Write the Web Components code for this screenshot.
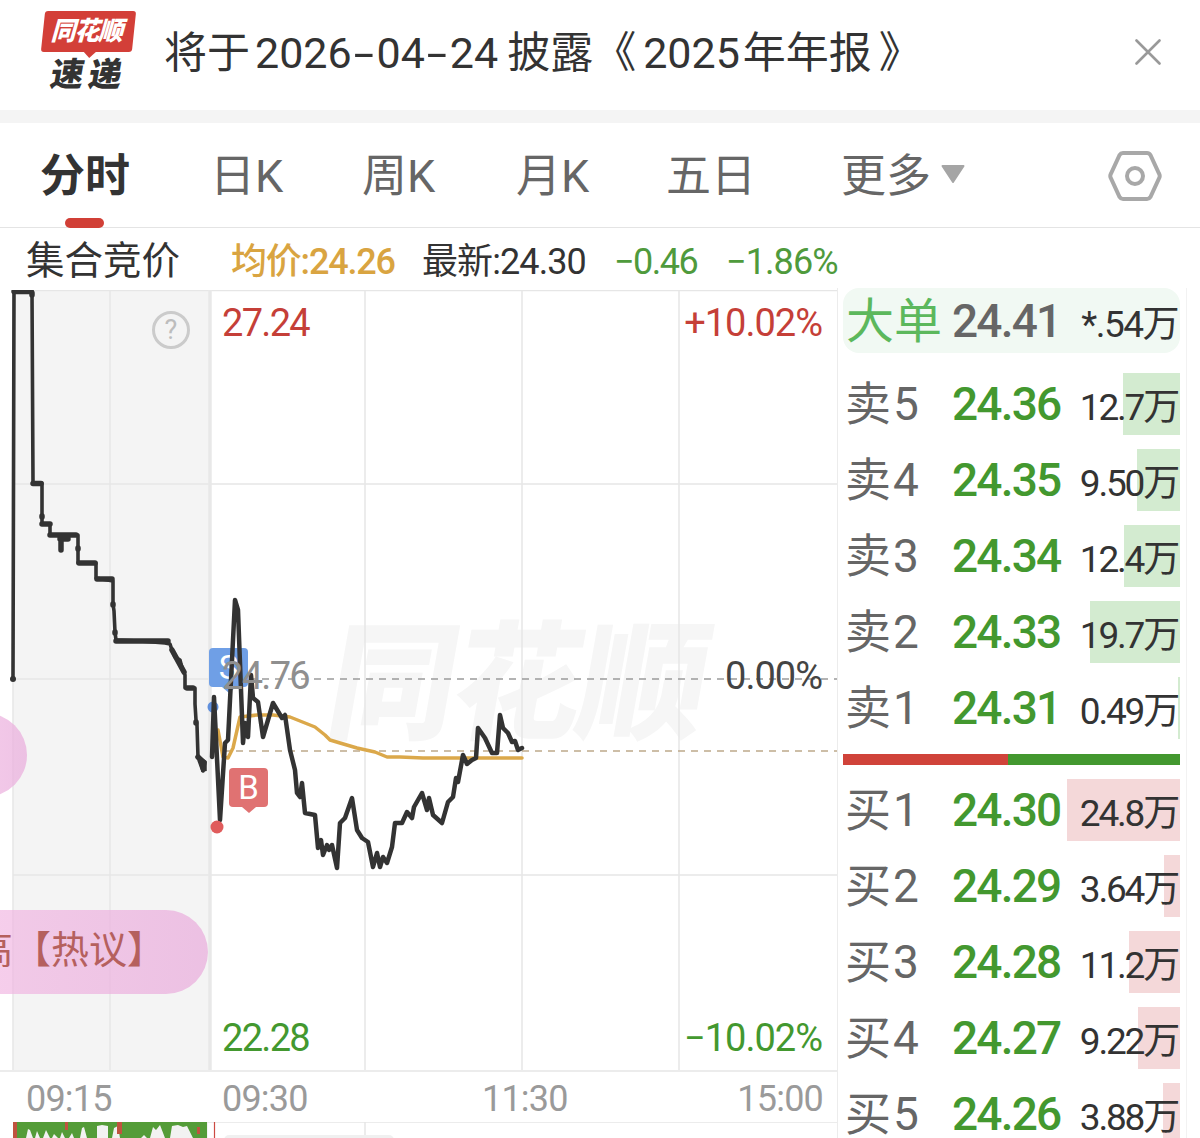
<!DOCTYPE html>
<html lang="zh">
<head>
<meta charset="utf-8">
<title>分时</title>
<style>
    html, body
    {
        margin: 0;
        background: #fff;
        height: 1138px;
        overflow: hidden;
        font-family: Roboto, "Noto Sans CJK SC", sans-serif;
    }
</style>
</head>
<body>

<ths-banner>将于<span style="margin-left:5px">2026</span><span class="h">-</span>04<span class="h">-</span><span style="margin-right:9px">24</span>披露《<span style="margin:0 3px 0 7px">2025</span>年年报<span style="margin-left:7px">》</span></ths-banner>

<ths-tabs>
    <ths-tab slot="tabs" active style="width:170px">分时</ths-tab>
    <ths-tab slot="tabs" style="width:152px">日K</ths-tab>
    <ths-tab slot="tabs" style="width:154px">周K</ths-tab>
    <ths-tab slot="tabs" style="width:150px">月K</ths-tab>
    <ths-tab slot="tabs" style="width:175px">五日</ths-tab>
    <ths-tab slot="tabs" caret>更多</ths-tab>
</ths-tabs>

<ths-quote></ths-quote>

<ths-main>
    <ths-chart slot="chart"></ths-chart>
    <ths-book slot="book">
        <ths-big-order></ths-big-order>
        <ths-level side="sell" label="卖5" price="24.36" vol="12.7" bar="57"></ths-level>
        <ths-level side="sell" label="卖4" price="24.35" vol="9.50" bar="43"></ths-level>
        <ths-level side="sell" label="卖3" price="24.34" vol="12.4" bar="56"></ths-level>
        <ths-level side="sell" label="卖2" price="24.33" vol="19.7" bar="90"></ths-level>
        <ths-level side="sell" label="卖1" price="24.31" vol="0.49" bar="2"></ths-level>
        <ths-ratio></ths-ratio>
        <ths-level side="buy" label="买1" price="24.30" vol="24.8" bar="113"></ths-level>
        <ths-level side="buy" label="买2" price="24.29" vol="3.64" bar="16"></ths-level>
        <ths-level side="buy" label="买3" price="24.28" vol="11.2" bar="51"></ths-level>
        <ths-level side="buy" label="买4" price="24.27" vol="9.22" bar="42"></ths-level>
        <ths-level side="buy" label="买5" price="24.26" vol="3.88" bar="17"></ths-level>
    </ths-book>
</ths-main>

<script>
/**
 * base class: clones static sTemplate into an open shadow root
 */
class THSElement extends HTMLElement
{
    static sTemplate = ``;

    constructor()
    {
        super();
        this.attachShadow({mode: "open"});
        const objTemplate = document.createElement("template");
        objTemplate.innerHTML = this.constructor.sTemplate;
        this.shadowRoot.appendChild(objTemplate.content.cloneNode(true));
    }
}

/**
 * top banner: logo, title, close button
 */
class THSBanner extends THSElement
{
    static sTemplate = `
        <style>
            :host
            {
                display: flex;
                align-items: center;
                height: 110px;
                padding-left: 41px;
                padding-right: 39px;
                border-bottom: 13px solid #f4f4f4;
                color: #333;
            }
            .logo
            {
                display: flex;
                flex-direction: column;
                width: 96px;
                margin-right: 27px;
                margin-top: -6px;
                flex: none;
            }
            .badge
            {
                position: relative;
                width: 91px;
                height: 41px;
                margin-left: 2px;
                background: #d33f38;
                border-radius: 3px;
                transform: skewX(-6deg);
                color: #fff;
                font-size: 26px;
                font-weight: 900;
                line-height: 41px;
                text-align: center;
                white-space: nowrap;
            }
            .badge span
            {
                display: inline-block;
                transform: skewX(-10deg) scaleX(0.95);
                letter-spacing: -1px;
            }
            .badge::after
            {
                content: "";
                position: absolute;
                left: 43px;
                bottom: -6px;
                width: 0;
                height: 0;
                border-left: 6px solid transparent;
                border-right: 6px solid transparent;
                border-top: 6px solid #d33f38;
            }
            .sub
            {
                margin-top: 5px;
                padding-left: 10px;
                font-size: 33px;
                line-height: 36px;
                font-weight: 900;
                color: #333;
                letter-spacing: 5px;
                transform: skewX(-10deg);
                white-space: nowrap;
            }
            .title
            {
                flex: 1;
                font-size: 43px;
                line-height: 50px;
                white-space: nowrap;
                margin-top: -4px;
            }
            ::slotted(.h)
            {
                display: inline-block;
                margin: 0 6.5px;
                transform: scaleX(1.700);
            }
            svg { flex: none; display: block; margin-top: -6px; }
        </style>
        <div class="logo">
            <div class="badge"><span>同花顺</span></div>
            <div class="sub">速递</div>
        </div>
        <div class="title"><slot></slot></div>
        <svg width="26" height="26" viewBox="0 0 26 26"><path d="M1.5 1.5L24.5 24.5M24.5 1.5L1.5 24.5" stroke="#999" stroke-width="2.6" stroke-linecap="round" fill="none"/></svg>
    `;
}

/**
 * tab strip with settings icon
 */
class THSTabs extends THSElement
{
    static sTemplate = `
        <style>
            :host
            {
                display: flex;
                align-items: stretch;
                height: 105px;
                box-sizing: border-box;
                border-bottom: 1px solid #e4e4e4;
                padding-left: 40px;
                padding-right: 38px;
            }
            .tabs { flex: 1; display: flex; }
            svg { align-self: center; display: block; margin-top: 1px; }
        </style>
        <div class="tabs"><slot name="tabs"></slot></div>
        <svg width="54" height="52" viewBox="0 0 54 52">
            <path d="M15 3H39a4 4 0 0 1 3.400 2L51 23.500a5 5 0 0 1 0 5L42.400 47a4 4 0 0 1-3.400 2H15a4 4 0 0 1-3.400-2L3 28.500a5 5 0 0 1 0-5L11.600 5A4 4 0 0 1 15 3Z" fill="none" stroke="#a8a8a8" stroke-width="4"/>
            <circle cx="27" cy="26" r="8" fill="none" stroke="#a8a8a8" stroke-width="4"/>
        </svg>
    `;
}

class THSTab extends THSElement
{
    static sTemplate = `
        <style>
            :host
            {
                display: flex;
                align-items: center;
                position: relative;
                height: 104px;
                font-size: 45px;
                color: #666;
                white-space: nowrap;
                padding-bottom: 5px;
                box-sizing: border-box;
            }
            :host([active])
            {
                color: #333;
                font-weight: 700;
            }
            :host([active])::after
            {
                content: "";
                position: absolute;
                left: 25px;
                bottom: -1px;
                width: 39px;
                height: 10px;
                border-radius: 5px;
                background: #d13f36;
            }
            .caret { display: none; margin-left: 10px; margin-top: 3px; }
            :host([caret]) .caret { display: block; }
        </style>
        <slot></slot>
        <svg class="caret" width="24" height="20" viewBox="0 0 24 20"><path d="M1.500 2H22.500L12 18Z" fill="#a5a5a5" stroke="#a5a5a5" stroke-width="2" stroke-linejoin="round"/></svg>
    `;
}

/**
 * line with latest quote numbers
 */
class THSQuote extends THSElement
{
    static sTemplate = `
        <style>
            :host
            {
                display: grid;
                grid-template-columns: 205px 191px 192px 112px 1fr;
                align-items: baseline;
                height: 60px;
                padding-left: 26px;
                padding-top: 1px;
                font-size: 36px;
                letter-spacing: -0.9px;
                white-space: nowrap;
                color: #333;
                box-sizing: border-box;
            }
            .name { font-size: 38.500px; letter-spacing: 0; }
            .avg { color: #d9a441; font-weight: 500; letter-spacing: -1.200px; }
            .down { color: #4f9a3c; }
            .tight { letter-spacing: -1.500px; }
        </style>
        <div class="name">集合竞价</div>
        <div class="avg">均价:24.26</div>
        <div>最新:24.30</div>
        <div class="down tight">−0.46</div>
        <div class="down">−1.86%</div>
    `;
}

/**
 * main part: chart on the left, order book on the right
 */
class THSMain extends THSElement
{
    static sTemplate = `
        <style>
            :host
            {
                display: flex;
                height: 850px;
                overflow: hidden;
            }
        </style>
        <slot name="chart"></slot>
        <slot name="book"></slot>
    `;
}

/**
 * intraday chart. svg uses page coordinates through its viewBox
 */
class THSChart extends THSElement
{
    static sStepLine = "M13 679L14 291L32 291L33 483L42 483L42 516L42 524L50 524L50 535L78 535L78 548L78 563L96 563L96 578L113 581L113 604L114 611L115 632L116 640L140 641L165 643L170 644L172 650L175 657L180 660L182 668L185 675L185 688L195 688L195 704L196 720L197 725L198 757L205 762L203 771L200 760";
    static sMainLine = "M212 757L214 697L220 820L225 743L228 740L235 600L238 610L243 743L245 723L248 737L251 675L253 698L258 702L263 737L273 703L282 718L285 715L290 750L295 770L297 793L300 797L302 783L305 813L315 815L318 848L321 840L323 855L327 845L329 850L332 845L337 868L340 823L345 818L352 798L357 830L362 838L368 842L373 867L377 853L380 867L383 857L387 863L392 847L395 823L402 823L407 812L412 818L414 807L422 793L427 810L429 798L433 815L442 823L448 802L453 797L456 778L458 782L463 755L467 764L472 760L476 758L478 728L485 738L492 753L497 753L500 715L503 728L508 733L512 742L515 741L518 750L522 748";
    static sAvgLine = "M218 730L223 757L228 758L233 748L240 717L257 715L273 715L290 717L300 721L315 727L325 735L330 740L340 743L357 748L375 752L387 757L400 757L423 758L522 758";
    static sCutouts = "M26 1138L28 1129L30 1130L33 1138ZM35 1138L37 1131L40 1138ZM43 1138L46 1130L50 1138ZM52 1138L54 1134L58 1138ZM60 1138L62 1132L65 1138ZM69 1138L72 1133L74 1138ZM80 1138L82 1128L84 1127L87 1138ZM97 1138V1126L102 1125L108 1126V1138ZM112 1138L114 1128L118 1126L120 1138ZM141 1138L144 1135L147 1138ZM150 1138L153 1127L156 1130L160 1125L165 1138ZM170 1138L172 1126L178 1125L183 1127L187 1126L193 1138Z";

    static sTemplate = `
        <style>
            :host
            {
                display: flex;
                flex-direction: column;
                position: relative;
                width: 837px;
                flex: none;
                height: 848px;
                margin-top: 2px;
                overflow: hidden;
                color: #333;
            }
            .plot { position: relative; height: 780px; flex: none; }
            .plot svg { position: absolute; left: 0; top: 0; display: block; }
            .mark
            {
                position: absolute;
                left: 330px;
                top: 330px;
                font-size: 128px;
                line-height: 130px;
                font-weight: 900;
                letter-spacing: -3px;
                color: #f6f6f6;
                transform: skewX(-10deg);
                white-space: nowrap;
            }
            .lbl
            {
                position: absolute;
                font-size: 38px;
                line-height: 44px;
                letter-spacing: -1.700px;
                white-space: nowrap;
            }
            .red { color: #c53f38; }
            .green { color: #43982f; }
            .r { right: 15px; letter-spacing: -1px; }
            .pill
            {
                position: absolute;
                display: flex;
                justify-content: flex-end;
                height: 84px;
                border-radius: 42px;
                background: linear-gradient(to right, rgba(243, 180, 226, 0.62), rgba(234, 178, 222, 0.78));
                color: #b5605e;
                font-size: 38px;
                line-height: 80px;
                white-space: nowrap;
                box-sizing: border-box;
                overflow: hidden;
            }
            .badge
            {
                position: absolute;
                width: 39px;
                height: 39px;
                border-radius: 4px;
                color: #fff;
                font-size: 33px;
                line-height: 39px;
                text-align: center;
            }
            .badge::after
            {
                content: "";
                position: absolute;
                left: 13px;
                bottom: -6px;
                border-left: 7px solid transparent;
                border-right: 7px solid transparent;
                border-top: 6px solid var(--badge);
            }
            .s { --badge: #6f9fe6; left: 209px; top: 358px; background: #6f9fe6; }
            .b { --badge: #e07272; left: 229px; top: 478px; background: #e07272; }
            .help
            {
                position: absolute;
                left: 152px;
                top: 21px;
                width: 32px;
                height: 32px;
                border: 3px solid #cbcbcb;
                border-radius: 50%;
                color: #bdbdbd;
                font-size: 27px;
                line-height: 33px;
                text-align: center;
            }
            .times
            {
                display: grid;
                grid-template-columns: 196px 260px 1fr auto;
                align-items: center;
                height: 52px;
                flex: none;
                box-sizing: border-box;
                padding: 4px 14px 0 26px;
                font-size: 36px;
                letter-spacing: -0.8px;
                color: #9a9a9a;
                border-top: 2px solid #ececec;
            }
            .vol { display: block; flex: none; }
        </style>
        <div class="plot">
            <div class="mark">同花顺</div>
            <svg width="837" height="780" viewBox="0 290 837 780">
                <rect x="13" y="290" width="196" height="780" fill="#f4f4f4"/>
                <g stroke="#e6e6e6" stroke-width="1.500" fill="none">
                    <path d="M13 290V1070M110 290V1070M365 290V1070M522 290V1070M679 290V1070"/>
                    <path d="M13 290.500H837M13 484H837M13 679H210M13 875H837"/>
                </g>
                <path d="M210 290V1070" stroke="#e8e8e8" stroke-width="3.500"/>
                <path d="M210 679H837" stroke="#9b9b9b" stroke-width="1.500" stroke-dasharray="7 6"/>
                <path d="M210 751H837" stroke="#bda98a" stroke-width="1.500" stroke-dasharray="7 6"/>
                <path d="${THSChart.sAvgLine}" fill="none" stroke="#dba84a" stroke-width="3.500" stroke-linejoin="round" stroke-linecap="round"/>
                <path d="${THSChart.sStepLine}" fill="none" stroke="#333" stroke-width="3.600" stroke-linejoin="round" stroke-linecap="round"/>
                <path d="M14 291.500H31M32 293V295M33 483.500H41M42 516V517M42 524H50M50 535H76M61 537V550M60 539H68M78 548V549M79 563H95M97 579H112M113 604V605M115 632V633M116 641H168M172 650L184 672M187 688H193M196 722V723M198 757L204 763L204 771L200 760" fill="none" stroke="#333" stroke-width="5.500" stroke-linecap="round"/>
                <circle cx="13" cy="679" r="3" fill="#333"/>
            </svg>
            <div class="badge s">S</div>
            <svg width="837" height="780" viewBox="0 290 837 780">
                <circle cx="213" cy="707" r="5.500" fill="#5f8fdc"/>
                <path d="${THSChart.sMainLine}" fill="none" stroke="#333" stroke-width="4.500" stroke-linejoin="round" stroke-linecap="round"/>
                <circle cx="217" cy="827" r="6.500" fill="#e05c5c"/>
            </svg>
            <div class="badge b">B</div>
            <div class="help">?</div>
            <div class="lbl red" style="left:222px;top:11px">27.24</div>
            <div class="lbl red r" style="top:11px">+10.02%</div>
            <div class="lbl" style="left:222px;top:364px;color:#8f8f8f">24.76</div>
            <div class="lbl r" style="top:364px;color:#444">0.00%</div>
            <div class="lbl green" style="left:222px;top:726px">22.28</div>
            <div class="lbl green r" style="top:726px">−10.02%</div>
            <div class="pill" style="left:-57px;top:423px;width:84px"></div>
            <div class="pill" style="left:-60px;top:620px;width:268px;padding-right:43px"><span>高【热议】</span></div>
        </div>
        <div class="times">
            <div>09:15</div>
            <div>09:30</div>
            <div>11:30</div>
            <div>15:00</div>
        </div>
        <svg class="vol" width="837" height="16" viewBox="0 1122 837 16">
            <rect x="13" y="1122" width="195" height="16" fill="#f4f4f4"/>
            <path d="M13 1122H837" stroke="#e6e6e6" stroke-width="1.500"/>
            <path d="M365 1122V1138" stroke="#e6e6e6" stroke-width="1.500"/>
            <rect x="13" y="1122" width="194" height="16" fill="#549c38"/>
            <path d="${THSChart.sCutouts}" fill="#f2f2f2"/>
            <path d="M13 1122H17V1138H13ZM65 1122H68V1130H65ZM117 1122H122V1134H117ZM197 1127H200V1134H197Z" fill="#c0533f"/>
            <path d="M214.500 1122V1138" stroke="#cc4a42" stroke-width="1.200"/>
            <rect x="224" y="1135" width="170" height="12" rx="5" fill="#f0f0f0"/>
        </svg>
    `;
}

/**
 * order book column
 */
class THSBook extends THSElement
{
    static sTemplate = `
        <style>
            :host
            {
                display: flex;
                flex-direction: column;
                flex: none;
                width: 350px;
                gap: 14px;
                box-sizing: border-box;
                height: 860px;
                padding: 0 6px 0 5px;
                border-left: 1px solid #ececec;
                border-right: 1px solid #f2f2f2;
            }
        </style>
        <slot></slot>
    `;
}

class THSBigOrder extends THSElement
{
    static sTemplate = `
        <style>
            :host
            {
                display: flex;
                align-items: center;
                height: 65px;
                margin-bottom: 6px;
                flex: none;
                padding-left: 3px;
                padding-right: 2px;
                border-radius: 16px;
                background: #f1f9f3;
                white-space: nowrap;
            }
            .name { width: 106px; flex: none; font-size: 48px; color: #5cb85c; margin-bottom: 8px; }
            .price { flex: 1; font-size: 46px; font-weight: 500; letter-spacing: -1.800px; color: #666; }
            .vol { font-size: 37px; letter-spacing: -1.500px; color: #333; }
        </style>
        <div class="name">大单</div>
        <div class="price">24.41</div>
        <div class="vol">*.54万</div>
    `;
}

/**
 * one row of the book. attributes: side, label, price, vol, bar (width in px)
 */
class THSLevel extends THSElement
{
    static sTemplate = `
        <style>
            :host
            {
                display: flex;
                align-items: center;
                height: 62px;
                flex: none;
                padding-left: 2px;
                padding-right: 2px;
                white-space: nowrap;
                background-repeat: no-repeat;
                background-position: right top;
            }
            .label { width: 107px; flex: none; font-size: 46px; letter-spacing: 2px; color: #666; margin-bottom: 8px; }
            .price { flex: 1; font-size: 46px; font-weight: 500; letter-spacing: -1.800px; color: #43982f; }
            .vol { font-size: 37px; letter-spacing: -2.200px; color: #333; }
        </style>
        <div class="label"></div>
        <div class="price"></div>
        <div class="vol"></div>
    `;

    connectedCallback()
    {
        const sColor = this.getAttribute("side") == "buy" ? "#f4d8d9" : "#d3ebd0";

        this.shadowRoot.querySelector(".label").textContent = this.getAttribute("label");
        this.shadowRoot.querySelector(".price").textContent = this.getAttribute("price");
        this.shadowRoot.querySelector(".vol").textContent = this.getAttribute("vol") + "万";
        this.style.backgroundImage = "linear-gradient(" + sColor + "," + sColor + ")";
        this.style.backgroundSize = this.getAttribute("bar") + "px 100%";
    }
}

class THSRatio extends THSElement
{
    static sTemplate = `
        <style>
            :host
            {
                display: flex;
                height: 11px;
                flex: none;
                margin-top: 1px;
            }
            .red { width: 165px; background: #d0433a; }
            .green { flex: 1; background: #43982f; }
        </style>
        <div class="red"></div>
        <div class="green"></div>
    `;
}

customElements.define("ths-banner", THSBanner);
customElements.define("ths-tabs", THSTabs);
customElements.define("ths-tab", THSTab);
customElements.define("ths-quote", THSQuote);
customElements.define("ths-main", THSMain);
customElements.define("ths-chart", THSChart);
customElements.define("ths-book", THSBook);
customElements.define("ths-big-order", THSBigOrder);
customElements.define("ths-level", THSLevel);
customElements.define("ths-ratio", THSRatio);
</script>
</body>
</html>
